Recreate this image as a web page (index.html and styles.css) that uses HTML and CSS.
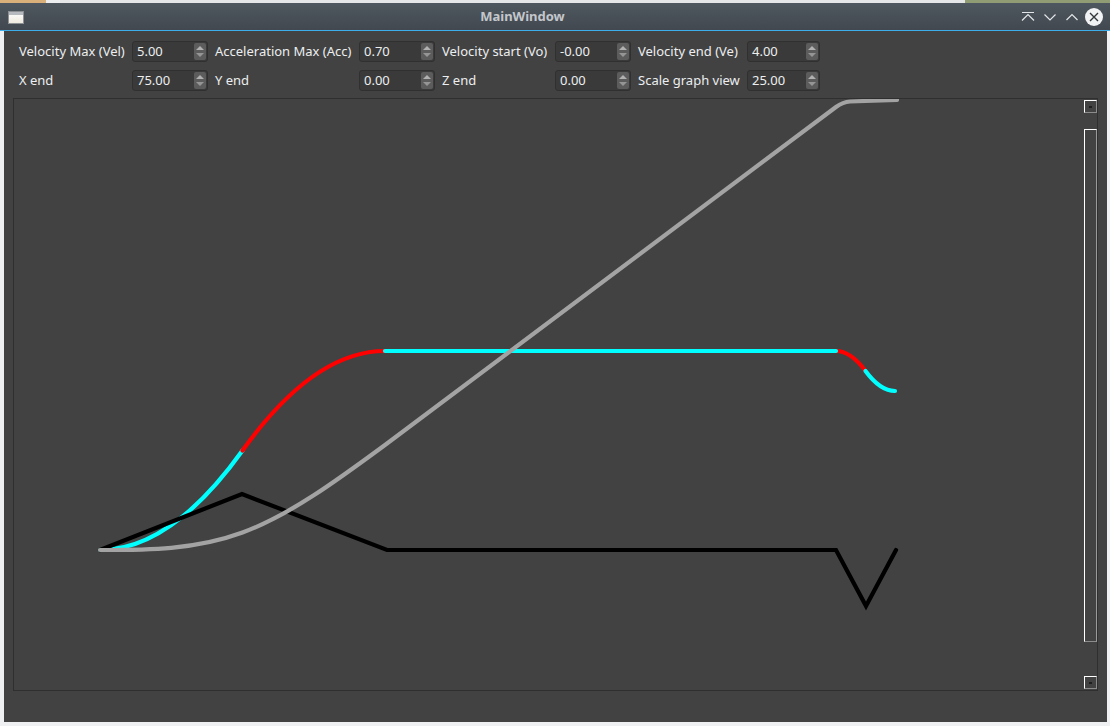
FILE: index.html
```html
<!DOCTYPE html>
<html>
<head>
<meta charset="utf-8">
<title>MainWindow</title>
<link rel="stylesheet" href="styles.css">
</head>
<body>
<div class="desk"><span class="desk-a"></span><span class="desk-b"></span><span class="desk-c"></span><span class="desk-d"></span></div>
<div class="titlebar">
  <div class="winicon-wrap"><div class="winicon"><div class="winicon-bar"></div></div></div>
  <div class="title">MainWindow</div>
  <div class="tbtns">
    <div class="tbtn"><svg width="16" height="16" viewBox="0 0 16 16"><path d="M2 3.5H14M2 11.5L8 5.5L14 11.5" fill="none" stroke="#e3e6e8" stroke-width="1.2"/></svg></div>
    <div class="tbtn"><svg width="16" height="16" viewBox="0 0 16 16"><path d="M2.5 5.5L8 11L13.5 5.5" fill="none" stroke="#e3e6e8" stroke-width="1.2"/></svg></div>
    <div class="tbtn"><svg width="16" height="16" viewBox="0 0 16 16"><path d="M2.5 11L8 5.5L13.5 11" fill="none" stroke="#e3e6e8" stroke-width="1.2"/></svg></div>
    <div class="tbtn"><svg width="18" height="18" viewBox="0 0 18 18"><circle cx="9" cy="9" r="9" fill="#f1f2f3"/><path d="M5 5L13 13M13 5L5 13" stroke="#31363b" stroke-width="1.4"/></svg></div>
  </div>
</div>
<div class="window">
  <div class="form">
    <label class="lbl">Velocity Max (Vel)</label>
    <div class="spin"><span class="val">5.00</span><span class="arrows"><i class="up"></i><i class="down"></i></span></div>
    <label class="lbl">Acceleration Max (Acc)</label>
    <div class="spin"><span class="val">0.70</span><span class="arrows"><i class="up"></i><i class="down"></i></span></div>
    <label class="lbl">Velocity start (Vo)</label>
    <div class="spin"><span class="val">-0.00</span><span class="arrows"><i class="up"></i><i class="down"></i></span></div>
    <label class="lbl">Velocity end (Ve)</label>
    <div class="spin"><span class="val">4.00</span><span class="arrows"><i class="up"></i><i class="down"></i></span></div>

    <label class="lbl">X end</label>
    <div class="spin"><span class="val">75.00</span><span class="arrows"><i class="up"></i><i class="down"></i></span></div>
    <label class="lbl">Y end</label>
    <div class="spin"><span class="val">0.00</span><span class="arrows"><i class="up"></i><i class="down"></i></span></div>
    <label class="lbl">Z end</label>
    <div class="spin"><span class="val">0.00</span><span class="arrows"><i class="up"></i><i class="down"></i></span></div>
    <label class="lbl">Scale graph view</label>
    <div class="spin"><span class="val">25.00</span><span class="arrows"><i class="up"></i><i class="down"></i></span></div>
  </div>
  <div class="frame">
    <div class="canvas">
      <svg width="1069" height="591" viewBox="14 99 1069 591">
        <g fill="none" stroke-width="4.2" stroke-linecap="round" stroke-linejoin="round">
          <path d="M100,550 C147.5,550 195,516.83 242.5,450.5" stroke="#00ffff"/>
          <path d="M242.5,450.5 C290,384.17 337.5,351 385,351" stroke="#ff0000"/>
          <path d="M836,351 C845.83,351 855.67,357.67 865.5,371" stroke="#ff0000"/>
          <path d="M385,351 L836,351" stroke="#00ffff"/>
          <path d="M865.5,371 C875.33,384.33 885.17,391 895,391" stroke="#00ffff"/>
          <path d="M100,550 L242,494 L387,550 L836,550 L866,606 L896,550" stroke="#000000" stroke-linejoin="miter"/>
          <path d="M100,550 C147.5,550 195,550 242.5,532.5 C290,515 337.5,480 385,445 L836,107 Q843,102 850,101.5 L897,100" stroke="#a3a3a3"/>
        </g>
      </svg>
    </div>
    <div class="vscroll">
      <div class="sbtn"><i></i></div>
      <div class="handle"></div>
      <div class="sgap"></div>
      <div class="sbtn"><i></i></div>
    </div>
  </div>
</div>
</body>
</html>
```
FILE: styles.css
```css
html, body {
  margin: 0;
  padding: 0;
}
body {
  width: 1110px;
  height: 726px;
  background: #eef0f1;
  overflow: hidden;
  font-family: "Noto Sans", "DejaVu Sans", sans-serif;
  font-size: 13px;
}
.desk {
  display: flex;
  height: 3px;
  background: #e2e4e6;
}
.desk-a { width: 46px; background: #d9b07a; }
.desk-b { width: 14px; background: #eceeef; }
.desk-c { width: 905px; background: #e4e6e8; }
.desk-d { flex: 1; background: #8f9c74; }

.titlebar {
  display: flex;
  align-items: center;
  height: 27px;
  background: linear-gradient(#4e575f, #42484f);
  border-bottom: 1px solid #3daee9;
}
.winicon-wrap {
  width: 28px;
  display: flex;
  justify-content: flex-start;
  padding-left: 8px;
  box-sizing: border-box;
}
.winicon {
  width: 16px;
  height: 13px;
  box-sizing: border-box;
  border: 1px solid #8d9196;
  background: linear-gradient(#ffffff, #efeadf);
  margin-top: 2px;
}
.winicon-bar {
  height: 3px;
  background: #b7bbbf;
}
.title {
  flex: 1;
  text-align: center;
  font-weight: bold;
  color: #c3c7cb;
  font-size: 13px;
  line-height: 27px;
}
.tbtns {
  display: flex;
  align-items: center;
  padding-right: 5px;
}
.tbtn {
  width: 22px;
  height: 27px;
  display: flex;
  align-items: center;
  justify-content: center;
}

.window {
  margin: 0 3px 0 4px;
  height: 691px;
  background: #424242;
  padding-top: 10px;
  box-sizing: border-box;
}
.form {
  display: grid;
  grid-template-columns: 106px 76px 137px 76px 106px 76px 102px 73px;
  grid-auto-rows: 21px;
  column-gap: 7px;
  row-gap: 8px;
  padding-left: 15px;
}
.lbl {
  color: #eceeef;
  line-height: 21px;
  white-space: nowrap;
}
.spin {
  display: flex;
  align-items: stretch;
  box-sizing: border-box;
  height: 21px;
  border: 1px solid #303030;
  border-radius: 3px;
  background: #3a3a3a;
}
.val {
  flex: 1;
  color: #eceeef;
  padding-left: 4px;
  line-height: 19px;
}
.arrows {
  width: 12px;
  margin: 1px 1px 1px 0;
  border-radius: 2px;
  background: #5c5c5c;
  display: flex;
  flex-direction: column;
  align-items: center;
  justify-content: center;
  gap: 3px;
}
.arrows i {
  display: block;
  width: 0;
  height: 0;
  border-left: 4px solid transparent;
  border-right: 4px solid transparent;
}
.arrows .up { border-bottom: 4px solid #b0b0b0; }
.arrows .down { border-top: 4px solid #959595; }

.frame {
  margin: 7px 9px 0 9px;
  height: 593px;
  box-sizing: border-box;
  border: 1px solid #2f2f2f;
  display: flex;
}
.canvas {
  flex: 1;
  overflow: hidden;
}
.canvas svg {
  display: block;
}
.vscroll {
  width: 14px;
  display: flex;
  flex-direction: column;
  padding: 1px 0 1px 1px;
  box-sizing: border-box;
}
.sbtn {
  width: 13px;
  height: 13px;
  box-sizing: border-box;
  border-top: 1px solid #ffffff;
  border-left: 1px solid #ffffff;
  border-right: 1px solid #8c8c8c;
  border-bottom: 1px solid #8c8c8c;
  display: flex;
  align-items: center;
  justify-content: center;
}
.sbtn i {
  display: block;
  width: 3px;
  height: 2px;
  background: #1e1e1e;
}
.handle {
  margin-top: 16px;
  width: 13px;
  height: 513px;
  box-sizing: border-box;
  border-top: 1px solid #ffffff;
  border-left: 1px solid #ffffff;
  border-right: 1px solid #9a9a9a;
  border-bottom: 1px solid #8c8c8c;
}
.sgap {
  flex: 1;
}
```
